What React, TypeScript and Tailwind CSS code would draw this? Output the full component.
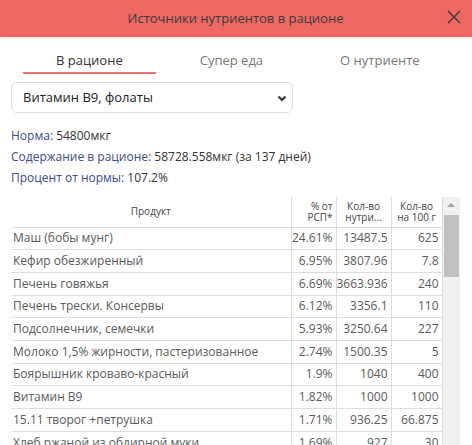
import React from "react";

const rows: [string, string, string, string][] = [
  ["Маш (бобы мунг)", "24.61%", "13487.5", "625"],
  ["Кефир обезжиренный", "6.95%", "3807.96", "7.8"],
  ["Печень говяжья", "6.69%", "3663.936", "240"],
  ["Печень трески. Консервы", "6.12%", "3356.1", "110"],
  ["Подсолнечник, семечки", "5.93%", "3250.64", "227"],
  ["Молоко 1,5% жирности, пастеризованное", "2.74%", "1500.35", "5"],
  ["Боярышник кроваво-красный", "1.9%", "1040", "400"],
  ["Витамин B9", "1.82%", "1000", "1000"],
  ["15.11 творог +петрушка", "1.71%", "936.25", "66.875"],
  ["Хлеб ржаной из обдирной муки", "1.69%", "927", "30"],
];

export default function App() {
  return (
    <div className="w-[472px] h-[445px] overflow-hidden bg-white font-['Open_Sans',sans-serif]">
      <header className="h-[37px] bg-[#ee6964] flex items-center relative shadow-[0_1px_2px_rgba(0,0,0,0.12)]">
        <h1 className="flex-1 text-center text-[13px] text-[#3a3a3a] pr-[1px]">Источники нутриентов в рационе</h1>
        <button className="absolute right-[10px] top-[9px] w-[16px] h-[16px] text-[#333]">
          <svg viewBox="0 0 16 16" className="w-4 h-4" fill="none" stroke="currentColor" strokeWidth={1.3}>
            <path d="M2 2l12 12M14 2L2 14" />
          </svg>
        </button>
      </header>

      <nav className="flex gap-[11px] pl-[23px] mt-[14px] text-[13px]">
        <div className="px-[33px] pb-[3px] border-b-[2px] border-[#e8716c] text-[#333] leading-[18px]">В рационе</div>
        <div className="px-[33px] pb-[3px] text-[#777] leading-[18px]">Супер еда</div>
        <div className="px-[33px] pb-[3px] text-[#777] leading-[18px]">О нутриенте</div>
      </nav>

      <div className="px-[11px]">
        <div className="mt-[8px] w-[282px] h-[31px] border border-[#ddd] rounded-[6px] flex items-center justify-between pl-[11px] pr-[5px] text-[13px] text-[#222]">
          <span>Витамин B9, фолаты</span>
          <svg viewBox="0 0 10 10" className="w-[10px] h-[10px] text-[#333]" fill="none" stroke="currentColor" strokeWidth={2}>
            <path d="M1.5 3.5L5 7l3.5-3.5" />
          </svg>
        </div>

        <div className="mt-[12px] text-[12px] leading-[21px] text-[#333]">
          <p><span className="text-[#3b4b8a]">Норма:</span> 54800мкг</p>
          <p><span className="text-[#3b4b8a]">Содержание в рационе:</span> 58728.558мкг (за 137 дней)</p>
          <p><span className="text-[#3b4b8a]">Процент от нормы:</span> 107.2%</p>
        </div>

        <div className="mt-[9px] flex">
          <table className="w-[431px] border-collapse table-fixed text-[12px] text-[#5a5a5a]">
            <colgroup>
              <col className="w-[280px]" />
              <col className="w-[45px]" />
              <col className="w-[55px]" />
              <col className="w-[51px]" />
            </colgroup>
            <thead>
              <tr className="h-[30px] border-b border-[#ddd] text-[10px] leading-[11px] text-[#444]">
                <th className="font-normal text-center">Продукт</th>
                <th className="font-normal text-right pr-[3px] border-l border-[#ddd]">% от<br />РСП*</th>
                <th className="font-normal text-center border-l border-[#ddd]">Кол-во<br />нутри...</th>
                <th className="font-normal text-center border-l border-[#ddd] border-r">Кол-во<br />на 100 г</th>
              </tr>
            </thead>
            <tbody>
              {rows.map((r) => (
                <tr key={r[0]} className="h-[22.7px] border-b border-[#ddd]">
                  <td className="pl-[2px] whitespace-nowrap overflow-hidden">{r[0]}</td>
                  <td className="text-right pr-[3px] border-l border-[#ddd]">{r[1]}</td>
                  <td className="text-right pr-[3px] border-l border-[#ddd]">{r[2]}</td>
                  <td className="text-right pr-[3px] border-l border-r border-[#ddd]">{r[3]}</td>
                </tr>
              ))}
            </tbody>
          </table>
          <div className="w-[17px] bg-[#f1f1f1] flex flex-col items-center shrink-0">
            <svg viewBox="0 0 8 4" className="w-[8px] h-[4px] mt-[6px] text-[#a3a3a3]" fill="currentColor">
              <path d="M0 4L4 0l4 4z" />
            </svg>
            <div className="mt-[8px] w-[15px] h-[62px] bg-[#c1c1c1]" />
          </div>
        </div>
      </div>
    </div>
  );
}
